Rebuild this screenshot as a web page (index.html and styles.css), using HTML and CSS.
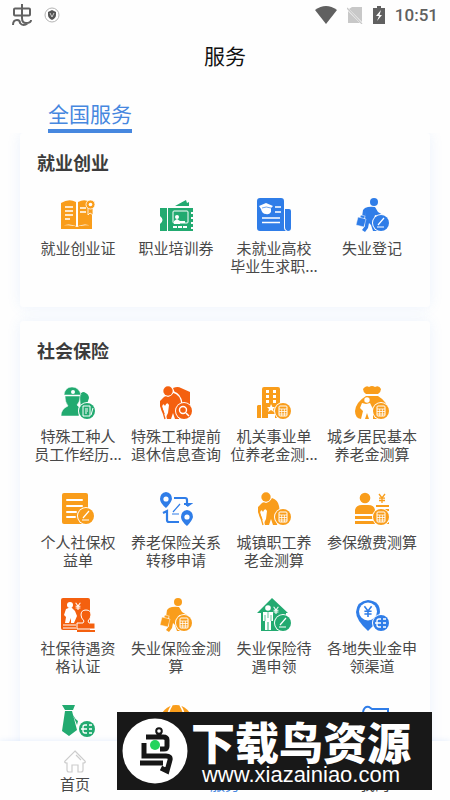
FILE: index.html
```html
<!DOCTYPE html>
<html lang="zh-CN">
  <head>
    <meta charset="utf-8" />
    <meta name="viewport" content="width=device-width, initial-scale=1" />
    <title>服务</title>
    <link rel="stylesheet" href="styles.css">
  </head>
  <body>
    <!-- shared shapes -->
    <svg class="shapes" aria-hidden="true">
      <symbol id="edit" viewBox="0 0 18 18">
        <circle cx="9" cy="9" r="9" fill="#fff" />
        <circle cx="9" cy="9" r="8" fill="currentColor" />
        <path d="M6 11L12 4M5 13H12" stroke="#fff" stroke-width="1.2" />
      </symbol>
      <symbol id="calc" viewBox="0 0 18 18">
        <circle cx="9" cy="9" r="9" fill="#fff" />
        <circle cx="9" cy="9" r="8" fill="currentColor" />
        <rect x="5" y="4" width="8" height="10" rx="1" fill="none" stroke="#fff" />
        <path d="M5 7H13M5 9.5H13M5 12H13M7.7 7V14M10.4 7V14" stroke="#fff" stroke-width=".8" />
      </symbol>
      <symbol id="coin" viewBox="0 0 18 18">
        <circle cx="9" cy="9" r="9" fill="#fff" />
        <circle cx="9" cy="9" r="8" fill="currentColor" />
        <path d="M9 5H7Q5 5 5 7V11Q5 13 7 13H9M3 9H9M11 5H14M11 9H14M11 13H14" fill="none" stroke="#fff" stroke-width="1.3" />
      </symbol>
      <symbol id="yen" viewBox="0 0 10 10">
        <path d="M2 1L5 5L8 1M5 5V10M2 5.2H8M2 7.5H8" fill="none" stroke="currentColor" stroke-width="1.3" />
      </symbol>
      <symbol id="walker" viewBox="0 0 34 34">
        <circle cx="19" cy="4" r="4" />
        <path d="M10 10Q14 8 20 9L23 14L28 17L27 19L20 17L19 21L21 26L22 33H18L16 27L14 25L13 30L10 34L7 32L10 28V21L11 14L10 20L7 19L8 12Z" />
        <path d="M3 19L11 21L9 29L1 27ZM5 19L6 17L10 18L9 21" stroke="#fff" stroke-width=".5" />
      </symbol>
      <symbol id="elder" viewBox="0 0 34 34">
        <circle cx="9" cy="5" r="4.7" />
        <path d="M4 12Q6 9 9 11Q13 10 15 6Q21 8 22 14L23 20L20 33H16L14 27L12 33H8L7 29L3 26L1 20V15Z" />
        <path d="M7 31L3 21Q4 16 6 20Q8 15 10 19L9 27Z" fill="#fff" />
        <path d="M2 19L6 33" fill="none" stroke="currentColor" stroke-width="1.3" />
      </symbol>
    </svg>

    <header class="header">
      <div class="status">
        <div class="status-group">
          <svg width="20" height="22" viewBox="0 0 20 22">
            <path d="M2 5.500Q2 4.500 3 4.500H17Q18 4.500 18 5.500V10.500Q18 11.500 17 11.500H3Q2 11.500 2 10.500ZM10 0V14Q10 19 14 19Q19 19 19 16M1 21Q1 16 5 16Q8 16 8 19Q11 23 16 19" fill="none" stroke="#626262" stroke-width="2" />
          </svg>
          <svg width="16" height="16" viewBox="0 0 16 16">
            <circle cx="8" cy="8" r="7" fill="#fff" stroke="#b4b4b4" />
            <path d="M8 3L12 5V8Q12 11 8 13Q4 11 4 8V5Z" fill="#555" />
            <path d="M6 6L8 10L10 6" fill="none" stroke="#ccc" />
          </svg>
        </div>
        <div class="status-group right">
          <svg width="22" height="18" viewBox="0 0 22 18">
            <path d="M0 4Q11-4 22 4L11 18Z" fill="#606060" />
          </svg>
          <svg width="16" height="18" viewBox="0 0 16 18">
            <path d="M5 1H15V16L2 3ZM1 5L13 17H1Z" fill="#c8c8c8" />
            <path d="M0 2L15 18" stroke="#c8c8c8" stroke-width="1.2" />
          </svg>
          <svg width="12" height="18" viewBox="0 0 12 18">
            <path d="M4 0H8V2H12V18H0V2H4Z" fill="#606060" />
            <path d="M8 4L3 10H6L4 15L9 9H6.500Z" fill="#fff" />
          </svg>
          <span class="clock">10:51</span>
        </div>
      </div>
      <h1 class="title">服务</h1>
      <div class="tabs"><a class="tab" href="#all">全国服务</a></div>
    </header>

    <main class="content" id="all">
      <section class="card">
        <h2>就业创业</h2>
        <div class="grid">
          <a class="item orange" href="#">
            <svg class="icon" viewBox="0 0 34 34">
              <path d="M0 5Q8 0 15 4V28Q8 25 0 28ZM17 4Q24 0 31 5V28Q24 25 17 28ZM0 27Q8 27 14 28Q16 30 18 28Q24 27 31 27V31H0Z" />
              <path d="M4 9H12M4 13H12M4 17H12M4 21H9M19 10H25M19 14H25" stroke="#fff" stroke-width="1.300" />
              <path d="M27 9V17L29 15L32 17V9Z" stroke="#fff" stroke-width=".8" />
              <circle cx="29.500" cy="6.500" r="4.500" stroke="#fff" stroke-width=".8" />
              <circle cx="29.500" cy="6.500" r="1.800" fill="#fff" />
            </svg>
            <span>就业创业证</span>
          </a>
          <a class="item green" href="#">
            <svg class="icon" viewBox="0 0 34 34">
              <path d="M16 8L27 2L28 5L30 4V8ZM1 10H8V33H1V26Q6 22 1 18ZM9 10H34V14H32V16H34V19H32V21H34V24H32V26H34V29H32V31H34V33H9Z" />
              <rect x="14" y="13" width="15" height="12" rx="1" fill="none" stroke="#fff" />
              <path d="M14 29H29" stroke="#fff" stroke-width="2" stroke-dasharray="4 1" />
              <circle cx="18" cy="19" r="2" fill="#fff" />
              <path d="M15 26V23L18 21L21 23H26V25H21V26Z" fill="#fff" />
            </svg>
            <span>职业培训券</span>
          </a>
          <a class="item blue" href="#">
            <svg class="icon" viewBox="0 0 34 34">
              <path d="M3 0H24Q27 0 27 3V30Q27 32 29 33H3Q0 33 0 30V3Q0 0 3 0ZM28 11H32Q34 11 34 13V30Q34 33 31 33Q28 32 28 29Z" />
              <path d="M2 8L9 5L16 8L14 10V14Q12 17 9 16Q5 16 4 11Z" fill="#fff" />
              <path d="M18 9H24M18 14H24M5 20H23M5 24.500H23" stroke="#fff" stroke-width="1.600" />
              <path d="M5 10Q9 8 14 10" fill="none" stroke="currentColor" stroke-width=".7" />
            </svg>
            <span>未就业高校<br />毕业生求职...</span>
          </a>
          <a class="item blue" href="#">
            <svg class="icon" viewBox="0 0 34 34">
              <use href="#walker" width="34" height="34" />
              <use href="#edit" x="17" y="16" width="18" height="18" />
            </svg>
            <span>失业登记</span>
          </a>
        </div>
      </section>

      <section class="card">
        <h2>社会保险</h2>
        <div class="grid">
          <a class="item green" href="#">
            <svg class="icon" viewBox="0 0 34 34">
              <path d="M19 11Q19 6 23 6Q28 8 28 12L26 18Q32 19 32 25H20Z" />
              <path d="M3 9Q4 1 11 1Q18 1 20 9ZM4 10H19Q19 16 16 19L18 21V30H0Q0 23 7 20Q4 16 4 10Z" stroke="#fff" stroke-width=".500" />
              <circle cx="12" cy="6" r="2" fill="#fff" />
              <circle cx="26" cy="25" r="9" fill="#fff" />
              <circle cx="26" cy="25" r="8" />
              <path d="M22 20H29V30H22ZM24 23H27M24 25H27M24 27H26M30 29L32 22" fill="none" stroke="#fff" />
            </svg>
            <span>特殊工种人<br />员工作经历...</span>
          </a>
          <a class="item red" href="#">
            <svg class="icon" viewBox="0 0 34 34">
              <path d="M14 2Q19 0 22 2L31 6V19L20 17Z" />
              <use href="#elder" width="34" height="34" />
              <path d="M14 6Q22 8 23 18" fill="none" stroke="#fff" stroke-width="1.300" />
              <circle cx="25" cy="25" r="9" fill="#fff" />
              <circle cx="25" cy="25" r="8" />
              <circle cx="24" cy="24" r="3.500" fill="none" stroke="#fff" stroke-width="1.400" />
              <path d="M27 27L30 30" stroke="#fff" stroke-width="1.500" />
            </svg>
            <span>特殊工种提前<br />退休信息查询</span>
          </a>
          <a class="item orange" href="#">
            <svg class="icon" viewBox="0 0 34 34">
              <path d="M7 1H21Q23 1 23 3V32H5V3Q5 1 7 1ZM1 19H4V32H0V20Z" />
              <path d="M9 4H12V7H9ZM16 4H19V7H16ZM9 9H12V12H9ZM16 9H19V12H16ZM9 14H12V17H9ZM16 14H19V17H16ZM14 18L15.500 21H18L16 23L17 26L14 24L11 26L12 23L10 21H13Z" fill="#fff" />
              <path d="M11 28H18V34H11Z" fill="#fff" />
              <use href="#calc" x="17" y="16" width="18" height="18" />
            </svg>
            <span>机关事业单<br />位养老金测...</span>
          </a>
          <a class="item orange" href="#">
            <svg class="icon" viewBox="0 0 34 34">
              <path d="M8 3Q11-1 14 1Q17-1 20 1Q24-1 26 3Q26 6 23 8H11Q8 6 8 3ZM11 10H23Q33 16 33 25Q33 33 27 33H6Q0 32 0 25Q1 16 11 10Z" />
              <circle cx="12" cy="14" r="2.700" fill="#fff" />
              <path d="M7 17L11 18L15 17L18 23V33H14L12 27L10 33H6L8 25L5 22Z" fill="#fff" />
              <use href="#calc" x="17" y="16" width="18" height="18" />
            </svg>
            <span>城乡居民基本<br />养老金测算</span>
          </a>

          <a class="item orange" href="#">
            <svg class="icon" viewBox="0 0 34 34">
              <path d="M3 1H25Q27 1 27 3V32H3Q1 32 1 30V3Q1 1 3 1Z" />
              <path d="M6 8H21M6 14H21M6 20H15M6 25H14" stroke="#fff" stroke-width="2" stroke-linecap="round" />
              <use href="#edit" x="16" y="15" width="18" height="18" />
            </svg>
            <span>个人社保权<br />益单</span>
          </a>
          <a class="item blue" href="#">
            <svg class="icon" viewBox="0 0 34 34">
              <path d="M7 0Q13 1 13 7Q12 11 7 16Q1 11 1 7Q1 1 7 0ZM28 18Q34 19 34 25Q33 29 28 34Q22 29 22 25Q22 19 28 18Z" />
              <circle cx="7" cy="7" r="2.600" fill="#fff" />
              <circle cx="28" cy="25" r="2.600" fill="#fff" />
              <path d="M15 6H26Q28 6 28 8V14M25 12H31L28 14M20 30H10Q8 30 8 28V20M4 21L8 19V23" fill="none" stroke="currentColor" stroke-width="2.200" />
              <path d="M14 20L21 12M13 22H20" stroke="currentColor" stroke-width="1.200" />
            </svg>
            <span>养老保险关系<br />转移申请</span>
          </a>
          <a class="item orange" href="#">
            <svg class="icon" viewBox="0 0 34 34">
              <use href="#elder" width="34" height="34" />
              <use href="#calc" x="17" y="16" width="18" height="18" />
            </svg>
            <span>城镇职工养<br />老金测算</span>
          </a>
          <a class="item orange" href="#">
            <svg class="icon" viewBox="0 0 34 34">
              <circle cx="10" cy="6" r="5.300" />
              <path d="M0 22V18Q1 13 7 13H13Q20 13 20 19V22ZM0 24H20V27H0ZM0 29H20V32H0ZM21 13H34V15H21ZM24 17H34V19H24ZM30 30H34V32H28Z" />
              <use href="#yen" x="22" y="1" width="10" height="10" />
              <use href="#calc" x="17" y="16" width="18" height="18" />
            </svg>
            <span>参保缴费测算</span>
          </a>

          <a class="item red" href="#">
            <svg class="icon" viewBox="0 0 34 34">
              <path d="M2 0H27Q29 0 29 2V32H2Q0 32 0 30V2Q0 0 2 0Z" />
              <circle cx="9" cy="7" r="3" fill="#fff" />
              <path d="M5 11L10 9L14 13L16 18L13 25H10V20L8 25H4L5 19L3 17Z" fill="#fff" />
              <use class="white" href="#yen" x="13" y="4" width="8" height="8" />
              <path d="M2 27H15M2 30H15" stroke="#fff" />
              <path d="M20 17Q20 12 25 12Q30 12 30 17Q30 20 27 23L28 25H34V31H16V25H22L23 23Q20 20 20 17Z" stroke="#fff" />
              <path d="M16 32H34V34H16Z" />
            </svg>
            <span>社保待遇资<br />格认证</span>
          </a>
          <a class="item orange" href="#">
            <svg class="icon" viewBox="0 0 34 34">
              <use href="#walker" width="34" height="34" />
              <use href="#calc" x="16" y="16" width="18" height="18" />
            </svg>
            <span>失业保险金测<br />算</span>
          </a>
          <a class="item green" href="#">
            <svg class="icon" viewBox="0 0 34 34">
              <path d="M15 0L31 15H29V33H4V15H0Z" />
              <circle cx="11" cy="10" r="2.800" fill="#fff" />
              <path d="M6 14H16V23H14V32H11.500V24H10.500V32H8V23H6Z" fill="#fff" />
              <path d="M8 17V23M14 17V23M11 14V20" stroke="currentColor" stroke-width=".7" />
              <use class="white" href="#yen" x="15" y="8" width="8" height="8" />
              <use href="#edit" x="17" y="16" width="18" height="18" />
            </svg>
            <span>失业保险待<br />遇申领</span>
          </a>
          <a class="item blue" href="#">
            <svg class="icon" viewBox="0 0 34 34">
              <path d="M13 2Q25 3 25 14Q24 23 13 33Q1 22 1 14Q2 3 13 2Z" />
              <circle cx="13" cy="13.500" r="9" fill="#fff" />
              <use href="#yen" x="7" y="7" width="12" height="12" />
              <use href="#coin" x="17" y="16" width="18" height="18" />
            </svg>
            <span>各地失业金申<br />领渠道</span>
          </a>

          <a class="item green" href="#">
            <svg class="icon" viewBox="0 0 34 34">
              <path d="M1 1H14L12 6H4ZM4 7H11L16 26L8 32L1 27ZM12 11Q14 15 17 17L16 21Z" />
              <use href="#coin" x="17" y="16" width="18" height="18" />
            </svg>
          </a>
          <a class="item orange" href="#">
            <svg class="icon" viewBox="0 0 34 34">
              <circle cx="17" cy="17" r="16" />
              <path d="M13 1Q3 17 13 33M21 1Q31 17 21 33M1 11H33M1 22H33" fill="none" stroke="#fff" stroke-width="1.500" />
            </svg>
          </a>
          <a class="item green" href="#">
            <svg class="icon" viewBox="0 0 34 34">
              <path d="M2 10H32V32H2Z" />
            </svg>
          </a>
          <a class="item blue" href="#">
            <svg class="icon" viewBox="0 0 34 34">
              <path d="M8 8Q9 2 14 3L17 5H33V31H10V8" fill="none" stroke="currentColor" stroke-width="2" />
            </svg>
          </a>
        </div>
      </section>
    </main>

    <nav class="navbar">
      <a href="#">
        <svg width="24" height="24" viewBox="0 0 24 24">
          <path d="M12 2L22 12Q23 14 20 14V21Q20 23 18 23H15V16H9V23H6Q4 23 4 21V14Q1 14 2 12ZM13 6L18 11" fill="none" stroke="#ccc" stroke-width="1.200" />
        </svg>
        <span>首页</span>
      </a>
      <a class="active" href="#">
        <svg width="24" height="24" viewBox="0 0 24 24">
          <path d="M3 3H10V10H3ZM14 3H21V10H14ZM3 14H10V21H3ZM14 14H21V21H14Z" fill="currentColor" />
        </svg>
        <span>服务</span>
      </a>
      <a href="#">
        <svg width="24" height="24" viewBox="0 0 24 24">
          <path d="M12 3A4 4 0 0 1 12 12A4 4 0 0 1 12 3M4 22Q4 14 12 14Q20 14 20 22Z" fill="none" stroke="#ccc" stroke-width="1.500" />
        </svg>
        <span>我的</span>
      </a>
    </nav>

    <div class="banner">
      <svg width="66" height="66" viewBox="0 0 66 66">
        <circle cx="33" cy="33" r="32.500" fill="#fff" />
        <path d="M37 12V17M22 25V38H44Q49 38 48 42L45 53L39 50M24 19H41Q45 19 45 22V28Q45 31 42 31H38M18 45H41" fill="none" stroke="#161616" stroke-width="5" />
        <circle cx="37" cy="13" r="2.800" fill="#fff" stroke="#161616" stroke-width="2" />
        <circle cx="33" cy="27" r="5" fill="#23d45c" />
      </svg>
      <div class="banner-text">
        <strong>下载鸟资源</strong>
        <span>www.xiazainiao.com</span>
      </div>
    </div>
  </body>
</html>
```
FILE: styles.css
```css
* {
  box-sizing: border-box;
}

body {
  position: relative;
  display: flex;
  flex-direction: column;
  height: 100vh;
  margin: 0;
  overflow: hidden;
  background: #fefefe;
  color: #484848;
  font-family: "Noto Sans CJK SC", sans-serif;
}

a {
  color: inherit;
  text-decoration: none;
}

svg {
  display: block;
  flex: none;
}

.shapes {
  position: absolute;
  width: 0;
  height: 0;
}

/* header */
.header {
  flex: none;
  background: #fefefe;
}

.status {
  display: flex;
  justify-content: space-between;
  align-items: center;
  height: 30px;
  padding: 0 12px;
}

.status-group {
  display: flex;
  align-items: center;
  gap: 12px;
}

.status-group.right {
  gap: 10px;
}

.clock {
  color: #606060;
  font: 500 17px/20px Roboto, sans-serif;
}

.title {
  margin: 0;
  color: #111;
  font-size: 21px;
  font-weight: 400;
  line-height: 50px;
  text-align: center;
}

.tabs {
  display: flex;
  padding: 19px 48px 0;
}

.tab {
  padding-bottom: 2px;
  border-bottom: 4px solid #4687df;
  color: #4687df;
  font-size: 21px;
  line-height: 28px;
}

/* service cards */
.content {
  flex: 1;
  min-height: 0;
  padding: 0 20px;
  overflow: hidden;
}

.card {
  margin-bottom: 14px;
  padding: 17px 9px 31px;
  border-radius: 4px;
  background: #fefefe;
  box-shadow: 0 0 14px rgba(70, 135, 240, 0.1);
}

.card h2 {
  margin: 0 8px 24px;
  color: #3c3c3c;
  font-size: 18px;
  font-weight: 700;
  line-height: 24px;
}

.grid {
  display: grid;
  grid-template-columns: repeat(4, 1fr);
  row-gap: 28px;
}

.item {
  display: flex;
  flex-direction: column;
  align-items: center;
  gap: 7px;
}

.item span {
  min-height: 37px;
  color: #484848;
  font-size: 15px;
  line-height: 18px;
  text-align: center;
  white-space: nowrap;
}

.icon {
  width: 34px;
  height: 34px;
  fill: currentColor;
}

.orange {
  color: #f99d1b;
}

.green {
  color: #22aa70;
}

.blue {
  color: #2f7de8;
}

.red {
  color: #f4600f;
}

.white {
  color: #fff;
}

/* bottom navigation */
.navbar {
  display: grid;
  flex: none;
  grid-template-columns: repeat(3, 1fr);
  height: 59px;
  padding-top: 8px;
  background: #fefefe;
  box-shadow: 0 0 6px rgba(70, 135, 240, 0.15);
}

.navbar a {
  display: flex;
  flex-direction: column;
  align-items: center;
  font-size: 15px;
  line-height: 22px;
}

.navbar .active {
  color: #4687df;
}

/* download banner */
.banner {
  position: absolute;
  right: 18px;
  bottom: 10px;
  display: flex;
  align-items: center;
  width: 315px;
  height: 78px;
  padding-left: 5px;
  background: #181818;
  color: #fff;
}

.banner-text {
  display: flex;
  flex: 1;
  flex-direction: column;
  align-items: center;
  padding: 4px 18px 0 0;
}

.banner strong {
  font-size: 44px;
  font-weight: 900;
  line-height: 44px;
  white-space: nowrap;
}

.banner span {
  font: 22px/24px "Liberation Sans", sans-serif;
}
```
